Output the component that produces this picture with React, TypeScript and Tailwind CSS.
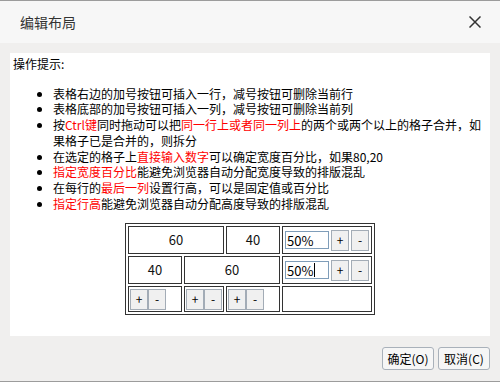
import React from "react";

const font = { fontFamily: '"Noto Sans CJK SC", "Noto Sans", sans-serif' };

function PmButtons({ joined = false }: { joined?: boolean }) {
  return (
    <div className={`flex ${joined ? "" : "gap-[2px]"}`}>
      <button className="w-[18px] h-[21px] border border-[#a3acb6] bg-[#f0f0f0] text-[12px] leading-none text-black flex items-center justify-center">
        +
      </button>
      <button className="w-[18px] h-[21px] border border-[#a3acb6] bg-[#f0f0f0] text-[12px] leading-none text-black flex items-center justify-center">
        -
      </button>
    </div>
  );
}

function PercentBox({ caret = false }: { caret?: boolean }) {
  return (
    <div className="w-[44px] h-[18px] border border-[#7f9db9] bg-white flex items-center pl-[1px] text-[13px] leading-none text-black">
      50%
      {caret && <span className="inline-block w-px h-[14px] bg-black ml-[1px]" />}
    </div>
  );
}

function RowTools({ caret = false }: { caret?: boolean }) {
  return (
    <div className="flex items-center gap-[2px] pl-[2px]">
      <PercentBox caret={caret} />
      <PmButtons />
    </div>
  );
}

export default function App() {
  const cell = "border border-[#333] bg-white";
  const num = `${cell} flex items-center justify-center text-[13px] text-[#111]`;

  return (
    <div
      className="w-[500px] h-[382px] flex flex-col bg-[#f0efee] border-t border-b border-[#9c9c9c] overflow-hidden"
      style={font}
    >
      {/* header */}
      <div className="h-[42px] bg-[#f7f7f7] flex items-center justify-between pl-[20px] pr-[19px]">
        <span className="text-[14px] text-[#333]">编辑布局</span>
        <svg width="12" height="12" viewBox="0 0 12 12">
          <path d="M0.5 0.5 L11.5 11.5 M11.5 0.5 L0.5 11.5" stroke="#333" strokeWidth="1.5" />
        </svg>
      </div>

      {/* body */}
      <div className="px-[10px] pt-[10px]">
        <div className="h-[283px] bg-white pl-[3px] pr-[3px] pt-[3px] text-[12px] leading-[15.7px] text-black">
          <div>操作提示:</div>
          <ul className="list-disc pl-[40px] mt-[14px]">
            <li>表格右边的加号按钮可插入一行，减号按钮可删除当前行</li>
            <li>表格底部的加号按钮可插入一列，减号按钮可删除当前列</li>
            <li>
              按<span className="text-[#ff0000]">Ctrl键</span>同时拖动可以把
              <span className="text-[#ff0000]">同一行上或者同一列上</span>
              的两个或两个以上的格子合并，如果格子已是合并的，则拆分
            </li>
            <li>
              在选定的格子上<span className="text-[#ff0000]">直接输入数字</span>
              可以确定宽度百分比，如果80,20
            </li>
            <li>
              <span className="text-[#ff0000]">指定宽度百分比</span>能避免浏览器自动分配宽度导致的排版混乱
            </li>
            <li>
              在每行的<span className="text-[#ff0000]">最后一列</span>设置行高，可以是固定值或百分比
            </li>
            <li>
              <span className="text-[#ff0000]">指定行高</span>能避免浏览器自动分配高度导致的排版混乱
            </li>
          </ul>

          <div className="mt-[12px] mx-auto w-[250px] border border-[#333] p-[2px]">
            <div className="grid grid-cols-[54px_40px_54px_90px] grid-rows-[28px_28px_26px] gap-[2px]">
              <div className={`${num} col-span-2`}>60</div>
              <div className={num}>40</div>
              <div className={`${cell} flex items-center`}>
                <RowTools />
              </div>

              <div className={num}>40</div>
              <div className={`${num} col-span-2`}>60</div>
              <div className={`${cell} flex items-center`}>
                <RowTools caret />
              </div>

              <div className={`${cell} flex items-center pl-[1px]`}>
                <PmButtons joined />
              </div>
              <div className={`${cell} flex items-center pl-[1px]`}>
                <PmButtons joined />
              </div>
              <div className={`${cell} flex items-center pl-[1px]`}>
                <PmButtons joined />
              </div>
              <div className={cell} />
            </div>
          </div>
        </div>
      </div>

      {/* footer */}
      <div className="flex justify-end gap-[4px] pt-[11px] pr-[10px]">
        <button className="w-[52px] h-[23px] border border-[#a9b1ba] rounded-[3px] bg-[#f6f6f6] text-[12px] text-black flex items-center justify-center">
          确定(O)
        </button>
        <button className="w-[52px] h-[23px] border border-[#a9b1ba] rounded-[3px] bg-[#f6f6f6] text-[12px] text-black flex items-center justify-center">
          取消(C)
        </button>
      </div>
    </div>
  );
}
